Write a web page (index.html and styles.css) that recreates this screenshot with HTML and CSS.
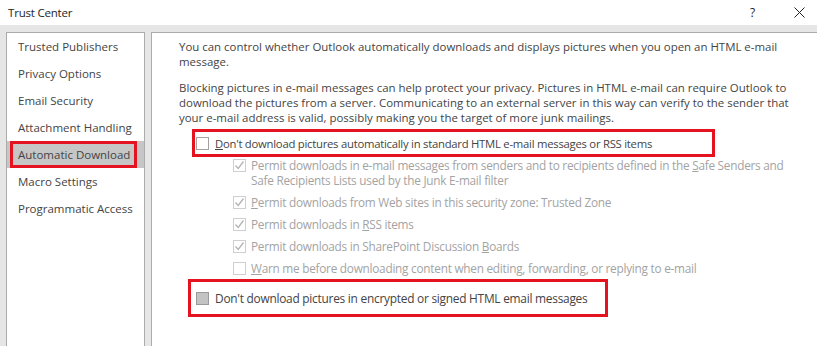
FILE: index.html
```html
<!DOCTYPE html>
<html lang="en">
<head>
    <meta charset="UTF-8">
    <title>Trust Center</title>
    <link rel="stylesheet" href="styles.css">
</head>
<body>
    <div class="titlebar">
        <span class="title">Trust Center</span>
        <div class="title-buttons">
            <span class="help">?</span>
            <svg class="close" width="11" height="11" viewBox="0 0 11 11">
                <path d="M0.5 0.5 L10.5 10.5 M10.5 0.5 L0.5 10.5" stroke="#222" stroke-width="1" fill="none"/>
            </svg>
        </div>
    </div>

    <div class="dialog">
        <ul class="nav">
            <li class="nav-item">Trusted Publishers</li>
            <li class="nav-item">Privacy Options</li>
            <li class="nav-item">Email Security</li>
            <li class="nav-item">Attachment Handling</li>
            <li class="nav-item active"><span class="hl">Automatic Download</span></li>
            <li class="nav-item">Macro Settings</li>
            <li class="nav-item">Programmatic Access</li>
        </ul>

        <div class="pane">
            <p class="intro">You can control whether Outlook automatically downloads and displays pictures when you open an HTML e-mail<br>message.</p>
            <p class="intro">Blocking pictures in e-mail messages can help protect your privacy. Pictures in HTML e-mail can require Outlook to<br>download the pictures from a server. Communicating to an external server in this way can verify to the sender that<br>your e-mail address is valid, possibly making you the target of more junk mailings.</p>

            <div class="opt boxed first-box">
                <span class="cb"></span>
                <span><u>D</u>on't download pictures automatically in standard HTML e-mail messages or RSS items</span>
            </div>

            <div class="subs">
                <div class="sub">
                    <span class="cb checked"><svg width="11" height="11" viewBox="0 0 11 11"><path d="M1.5 5.5 L4.2 8.5 L9.5 1.5" stroke="#b4b4b4" stroke-width="1.3" fill="none"/></svg></span>
                    <span>Permit downloads in e-mail messages from senders and to recipients defined in the <u>S</u>afe Senders and<br>Safe Recipients Lists used by the Junk E-mail filter</span>
                </div>
                <div class="sub">
                    <span class="cb checked"><svg width="11" height="11" viewBox="0 0 11 11"><path d="M1.5 5.5 L4.2 8.5 L9.5 1.5" stroke="#b4b4b4" stroke-width="1.3" fill="none"/></svg></span>
                    <span><u>P</u>ermit downloads from Web sites in this security zone: Trusted Zone</span>
                </div>
                <div class="sub">
                    <span class="cb checked"><svg width="11" height="11" viewBox="0 0 11 11"><path d="M1.5 5.5 L4.2 8.5 L9.5 1.5" stroke="#b4b4b4" stroke-width="1.3" fill="none"/></svg></span>
                    <span>Permit downloads in <u>R</u>SS items</span>
                </div>
                <div class="sub">
                    <span class="cb checked"><svg width="11" height="11" viewBox="0 0 11 11"><path d="M1.5 5.5 L4.2 8.5 L9.5 1.5" stroke="#b4b4b4" stroke-width="1.3" fill="none"/></svg></span>
                    <span>Permit downloads in SharePoint Discussion <u>B</u>oards</span>
                </div>
                <div class="sub">
                    <span class="cb"></span>
                    <span><u>W</u>arn me before downloading content when editing, forwarding, or replying to e-mail</span>
                </div>
            </div>

            <div class="opt boxed last-box">
                <span class="cb filled"></span>
                <span>Don't download pictures in encrypted or signed HTML email messages</span>
            </div>
        </div>
    </div>
</body>
</html>
```

FILE: styles.css
```css
body {
    margin: 0;
    width: 817px;
    height: 346px;
    overflow: hidden;
    font-family: "Open Sans", "Noto Sans", sans-serif;
    font-size: 11px;
    letter-spacing: -0.25px;
    color: #444444;
    background-color: #ffffff;
}

.titlebar {
    height: 25px;
    display: flex;
    align-items: center;
    justify-content: space-between;
    padding-left: 8px;
    background-color: #ffffff;
    color: #1e1e1e;
    font-size: 11.5px;
    letter-spacing: -0.2px;
}

.title-buttons {
    display: flex;
    align-items: center;
    gap: 39px;
    padding-right: 12px;
}

.help {
    font-size: 12px;
}

.dialog {
    display: flex;
    gap: 6px;
    height: 321px;
    padding: 7px 0 0 6px;
    box-sizing: border-box;
    background-color: #e6e6e6;
}

.nav {
    list-style: none;
    margin: 0;
    padding: 0;
    width: 139px;
    height: 330px;
    flex-shrink: 0;
    box-sizing: border-box;
    background-color: #ffffff;
    border: 1px solid #ababab;
    font-size: 11.5px;
    letter-spacing: 0;
}

.nav-item {
    height: 27px;
    display: flex;
    align-items: center;
    padding-left: 11px;
    white-space: nowrap;
}

.nav-item.active {
    padding-left: 3px;
    background-color: #c6c6c6;
}

.hl {
    display: flex;
    align-items: center;
    width: 127px;
    height: 27px;
    box-sizing: border-box;
    padding-left: 5px;
    border: 3px solid #e5121f;
}

.pane {
    flex: 1;
    height: 330px;
    box-sizing: border-box;
    background-color: #ffffff;
    border-top: 1px solid #ababab;
    border-left: 1px solid #ababab;
    padding: 6px 0 0 27px;
    white-space: nowrap;
}

.intro {
    margin: 0 0 11px 0;
    line-height: 15px;
    font-size: 11.45px;
    letter-spacing: 0;
}

.opt {
    display: flex;
    align-items: center;
    gap: 6px;
    font-size: 11.3px;
}

.cb {
    width: 13px;
    height: 13px;
    box-sizing: border-box;
    border: 1px solid #a2a2a2;
    background-color: #ffffff;
    flex-shrink: 0;
    display: flex;
    align-items: center;
    justify-content: center;
}

.boxed {
    border: 3px solid #e5121f;
    box-sizing: border-box;
}

.first-box {
    width: 523px;
    height: 28px;
    margin: -7px 0 0 13px;
    padding-left: 1px;
}

.last-box {
    width: 420px;
    height: 38px;
    margin: 3px 0 0 9px;
    padding-left: 5px;
    font-size: 11.9px;
}

.filled {
    background-color: #c3c3c3;
    border-color: #9a9a9a;
}

.subs {
    margin: 1px 0 0 54px;
    color: #a3a3a3;
    font-size: 11.8px;
}

.sub {
    display: flex;
    align-items: flex-start;
    gap: 5px;
    line-height: 15px;
    margin-bottom: 7px;
}

.sub .cb {
    margin-top: 1px;
    border-color: #cfcfcf;
}

.sub:last-child {
    margin-bottom: 0;
}
```
